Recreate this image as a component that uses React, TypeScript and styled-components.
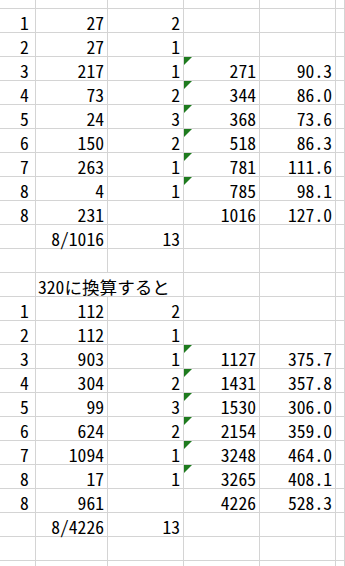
import { Fragment } from 'react';
import styled, { createGlobalStyle } from 'styled-components';

// --- Global ---
const GlobalStyle = createGlobalStyle`
  html, body {
    margin: 0;
    padding: 0;
    background: #ffffff;
  }
`;

// --- Styled components ---
const Sheet = styled.div`
  display: grid;
  grid-template-columns: 36px 72px 76px 76px 76px 1fr;
  grid-template-rows: 9px repeat(23, 24px) 1fr;
  width: 345px;
  height: 566px;
  overflow: hidden;
  font-family: 'Noto Sans Mono CJK JP', 'Noto Sans CJK JP', monospace;
  font-size: 17.6px;
  line-height: 18px;
  color: #000;
`;

const Cell = styled.div<{ $align?: 'left' | 'right'; $span?: number; $flag?: boolean; $last?: boolean }>`
  position: relative;
  box-sizing: border-box;
  display: flex;
  align-items: flex-end;
  justify-content: ${(p) => (p.$align === 'right' ? 'flex-end' : 'flex-start')};
  grid-column: span ${(p) => p.$span ?? 1};
  border-right: 1px solid #d4d4d4;
  border-bottom: ${(p) => (p.$last ? 'none' : '1px solid #d4d4d4')};
  padding: 0 3px 0 2px;
  white-space: nowrap;

  ${(p) =>
    p.$flag &&
    `
    &::before {
      content: '';
      position: absolute;
      top: 0;
      left: 0;
      width: 0;
      height: 0;
      border-top: 8px solid #1e7b1e;
      border-right: 8px solid transparent;
    }
  `}
`;

const IndexCell = styled(Cell)`
  padding-left: 20px;
`;

// --- Data ---
type Row = { cells: string[]; flag?: boolean; note?: string };

const rows: Row[] = [
  { cells: ['1', '27', '2', '', ''] },
  { cells: ['2', '27', '1', '', ''] },
  { cells: ['3', '217', '1', '271', '90.3'], flag: true },
  { cells: ['4', '73', '2', '344', '86.0'], flag: true },
  { cells: ['5', '24', '3', '368', '73.6'], flag: true },
  { cells: ['6', '150', '2', '518', '86.3'], flag: true },
  { cells: ['7', '263', '1', '781', '111.6'], flag: true },
  { cells: ['8', '4', '1', '785', '98.1'], flag: true },
  { cells: ['8', '231', '', '1016', '127.0'] },
  { cells: ['', '8/1016', '13', '', ''] },
  { cells: ['', '', '', '', ''] },
  { cells: [], note: '320に換算すると' },
  { cells: ['1', '112', '2', '', ''] },
  { cells: ['2', '112', '1', '', ''] },
  { cells: ['3', '903', '1', '1127', '375.7'], flag: true },
  { cells: ['4', '304', '2', '1431', '357.8'], flag: true },
  { cells: ['5', '99', '3', '1530', '306.0'], flag: true },
  { cells: ['6', '624', '2', '2154', '359.0'], flag: true },
  { cells: ['7', '1094', '1', '3248', '464.0'], flag: true },
  { cells: ['8', '17', '1', '3265', '408.1'], flag: true },
  { cells: ['8', '961', '', '4226', '528.3'] },
  { cells: ['', '8/4226', '13', '', ''] },
  { cells: ['', '', '', '', ''] },
];

function EmptyRow({ last }: { last?: boolean }) {
  return (
    <>
      {Array.from({ length: 6 }).map((_, i) => (
        <Cell key={i} $last={last} />
      ))}
    </>
  );
}

// --- App ---
export default function App() {
  return (
    <>
      <GlobalStyle />
      <Sheet>
        <EmptyRow />
        {rows.map((row, r) =>
          row.note ? (
            <Fragment key={r}>
              <Cell />
              <Cell $span={2}>{row.note}</Cell>
              <Cell />
              <Cell />
              <Cell />
            </Fragment>
          ) : (
            <Fragment key={r}>
              <IndexCell>{row.cells[0]}</IndexCell>
              {row.cells.slice(1).map((v, c) => (
                <Cell key={c} $align="right" $flag={row.flag && c === 2}>
                  {v}
                </Cell>
              ))}
              <Cell />
            </Fragment>
          )
        )}
        <EmptyRow last />
      </Sheet>
    </>
  );
}
